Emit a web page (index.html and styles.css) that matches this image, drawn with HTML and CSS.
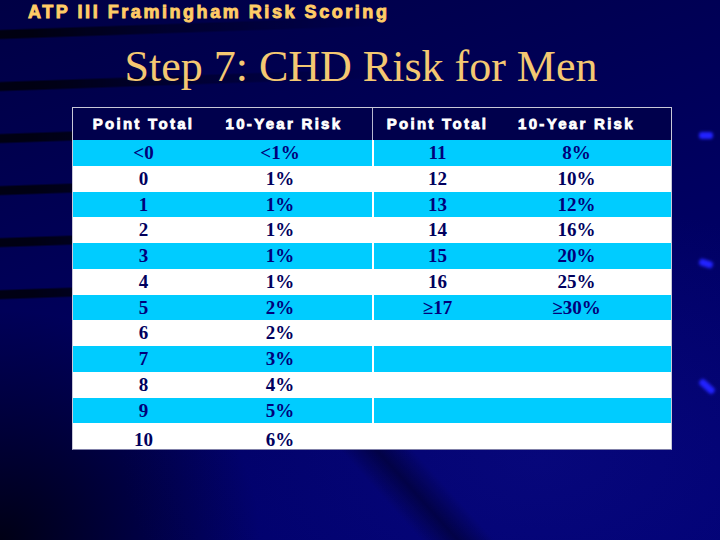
FILE: index.html
```html
<!DOCTYPE html>
<html lang="en">
<head>
<meta charset="utf-8">
<title>Step 7: CHD Risk for Men</title>
<link rel="stylesheet" href="styles.css">
</head>
<body>
<div class="slide">
  <div class="kicker">ATP III Framingham Risk Scoring</div>
  <h1 class="title">Step 7: CHD Risk for Men</h1>
  <div class="risk-table">
    <div class="row head">
      <div class="c1">Point Total</div><div class="c2">10-Year Risk</div><div class="c3">Point Total</div><div class="c4">10-Year Risk</div>
    </div>
    <div class="row cyan"><div class="c1">&lt;0</div><div class="c2">&lt;1%</div><div class="c3">11</div><div class="c4">8%</div></div>
    <div class="row white"><div class="c1">0</div><div class="c2">1%</div><div class="c3">12</div><div class="c4">10%</div></div>
    <div class="row cyan"><div class="c1">1</div><div class="c2">1%</div><div class="c3">13</div><div class="c4">12%</div></div>
    <div class="row white"><div class="c1">2</div><div class="c2">1%</div><div class="c3">14</div><div class="c4">16%</div></div>
    <div class="row cyan"><div class="c1">3</div><div class="c2">1%</div><div class="c3">15</div><div class="c4">20%</div></div>
    <div class="row white"><div class="c1">4</div><div class="c2">1%</div><div class="c3">16</div><div class="c4">25%</div></div>
    <div class="row cyan"><div class="c1">5</div><div class="c2">2%</div><div class="c3">&ge;17</div><div class="c4">&ge;30%</div></div>
    <div class="row white"><div class="c1">6</div><div class="c2">2%</div><div class="c3"></div><div class="c4"></div></div>
    <div class="row cyan"><div class="c1">7</div><div class="c2">3%</div><div class="c3"></div><div class="c4"></div></div>
    <div class="row white"><div class="c1">8</div><div class="c2">4%</div><div class="c3"></div><div class="c4"></div></div>
    <div class="row cyan"><div class="c1">9</div><div class="c2">5%</div><div class="c3"></div><div class="c4"></div></div>
    <div class="row white last"><div class="c1">10</div><div class="c2">6%</div><div class="c3"></div><div class="c4"></div></div>
  </div>
  <div class="ray ray-1"></div>
  <div class="ray ray-2"></div>
  <div class="ray ray-3"></div>
</div>
</body>
</html>
```
FILE: styles.css
```css
html, body {
  margin: 0;
  padding: 0;
}
body {
  width: 720px;
  height: 540px;
  overflow: hidden;
  background: #00005e;
}
.slide {
  position: relative;
  z-index: 0;
  width: 720px;
  height: 540px;
  overflow: hidden;
  display: flex;
  flex-direction: column;
  background:
    radial-gradient(ellipse 260px 230px at 0% 100%, rgba(0,0,12,0.9), rgba(0,0,20,0) 100%),
    linear-gradient(48deg, transparent 52%, rgba(0,0,40,0.6) 56.5%, transparent 61%) 0 440px / 720px 100px no-repeat,
    radial-gradient(ellipse 420px 260px at 75% 85%, rgba(20,20,150,0.35), rgba(20,20,150,0) 100%),
    linear-gradient(160deg, #000045 0%, #000056 35%, #000068 70%, #000072 100%);
}
.slide::before {
  content: "";
  position: absolute;
  left: 0;
  top: 0;
  width: 420px;
  height: 330px;
  z-index: -1;
  background: repeating-linear-gradient(178deg, transparent 0 29px, rgba(0,0,8,0.85) 31px 38px, transparent 40px 52px);
  -webkit-mask-image: linear-gradient(to right, #000 8%, rgba(0,0,0,0.5) 40%, transparent 90%);
  mask-image: linear-gradient(to right, #000 8%, rgba(0,0,0,0.5) 40%, transparent 90%);
}
.kicker {
  margin: 2px 0 0 28px;
  font-family: "Liberation Sans", Arial, sans-serif;
  font-weight: 700;
  font-size: 18px;
  line-height: 20px;
  letter-spacing: 2.55px;
  -webkit-text-stroke: 0.9px #ffcc66;
  color: #ffcc66;
}
.title {
  margin: 20px 0 0 0;
  text-align: center;
  padding-left: 2px;
  font-family: "Liberation Serif", "Times New Roman", serif;
  font-weight: 400;
  font-size: 44px;
  line-height: 50px;
  color: #f4c872;
}
.risk-table {
  margin: 15px 0 0 72px;
  width: 598px;
  border: 1px solid #c8c8d8;
  border-bottom: 1px solid #8080a8;
  font-family: "Liberation Serif", "Times New Roman", serif;
  font-weight: 700;
  font-size: 19px;
  color: #00005e;
}
.row {
  display: grid;
  grid-template-columns: 141px 158px 129px 170px;
  height: 25.75px;
  line-height: 25.75px;
  text-align: center;
}
.row > div {
  overflow: hidden;
}
.row .c2 {
  padding-right: 26px;
}
.row .c3 {
  border-left: 2px solid #ffffff;
}
.row .c4 {
  padding-right: 19px;
}
.row.head {
  height: 32px;
  line-height: 32px;
  background: #00004c;
  color: #ffffff;
  font-family: "Liberation Sans", Arial, sans-serif;
  font-size: 15px;
  letter-spacing: 2.3px;
  -webkit-text-stroke: 0.8px #ffffff;
}
.row.head .c3 {
  border-left: 1px solid #b8b8d0;
  padding-left: 1px;
}
.row.head .c2 {
  padding-right: 18px;
}
.row.cyan {
  background: #00ccff;
  color: #00007a;
}
.row.white {
  background: #ffffff;
}
.row.last > div {
  padding-top: 4px;
  box-sizing: border-box;
}
.ray {
  position: absolute;
  background: #2222ff;
  filter: blur(1.6px);
  border-radius: 3px;
}
.ray-1 {
  left: 699px;
  top: 132px;
  width: 14px;
  height: 7px;
}
.ray-2 {
  left: 699px;
  top: 260px;
  width: 14px;
  height: 7px;
  transform: rotate(18deg);
}
.ray-3 {
  left: 698px;
  top: 383px;
  width: 18px;
  height: 7px;
  transform: rotate(42deg);
}
```
